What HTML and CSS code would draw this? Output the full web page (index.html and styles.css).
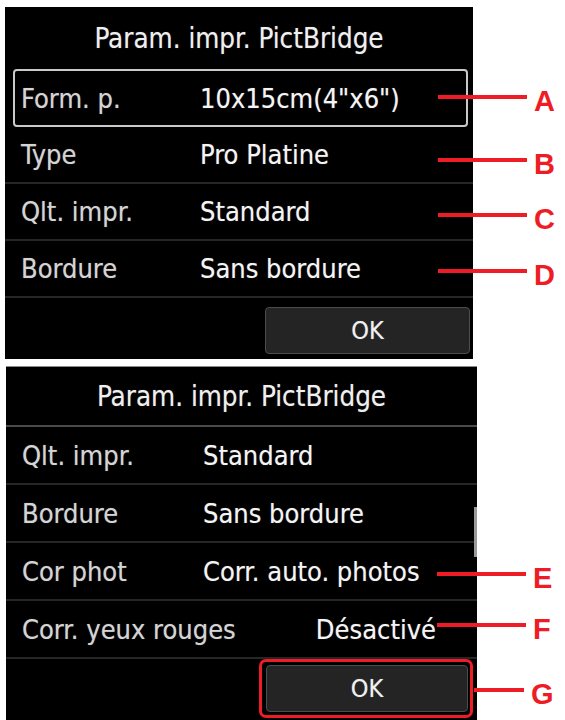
FILE: index.html
```html
<!DOCTYPE html>
<html lang="fr">
<head>
<meta charset="utf-8">
<title>Param. impr. PictBridge</title>
<link rel="stylesheet" href="styles.css">
</head>
<body>
<div class="page">
  <div class="screen screen-one">
    <div class="title">Param. impr. PictBridge</div>
    <div class="row selected"><span class="label">Form. p.</span><span class="value">10x15cm(4"x6")</span></div>
    <div class="row"><span class="label">Type</span><span class="value">Pro Platine</span></div>
    <div class="row"><span class="label">Qlt. impr.</span><span class="value">Standard</span></div>
    <div class="row"><span class="label">Bordure</span><span class="value">Sans bordure</span></div>
    <div class="footer"><div class="ok">OK</div></div>
  </div>

  <div class="screen screen-two">
    <div class="title">Param. impr. PictBridge</div>
    <div class="row"><span class="label">Qlt. impr.</span><span class="value">Standard</span></div>
    <div class="row"><span class="label">Bordure</span><span class="value">Sans bordure</span></div>
    <div class="row"><span class="label">Cor phot</span><span class="value">Corr. auto. photos</span></div>
    <div class="row"><span class="label">Corr. yeux rouges</span><span class="value value-right">Désactivé</span></div>
    <div class="footer"><div class="ok-wrap"><div class="ok">OK</div></div></div>
    <div class="scrollbar"></div>
  </div>

  <div class="callout c-a"><span class="line"></span><span class="letter">A</span></div>
  <div class="callout c-b"><span class="line"></span><span class="letter">B</span></div>
  <div class="callout c-c"><span class="line"></span><span class="letter">C</span></div>
  <div class="callout c-d"><span class="line"></span><span class="letter">D</span></div>
  <div class="callout c-e"><span class="line"></span><span class="letter">E</span></div>
  <div class="callout c-f"><span class="line"></span><span class="letter">F</span></div>
  <div class="callout c-g"><span class="line short"></span><span class="letter">G</span></div>
</div>
</body>
</html>
```
FILE: styles.css
```css
html, body {
  margin: 0;
  padding: 0;
  background: #ffffff;
}

.page {
  position: relative;
  width: 565px;
  height: 720px;
  overflow: hidden;
  padding-top: 7px;
  box-sizing: border-box;
}

.screen {
  background: #000000;
  color: #ececec;
  font-family: "DejaVu Sans Condensed", "DejaVu Sans", sans-serif;
  font-stretch: condensed;
  font-size: 27px;
  box-sizing: border-box;
  text-shadow: 0 0 1px rgba(255, 255, 255, 0.4);
}

.screen-one {
  margin-left: 5px;
  width: 468px;
  height: 352px;
}

.screen-two {
  position: relative;
  margin-left: 6px;
  margin-top: 7px;
  width: 471px;
  height: 360px;
  border-top: 1px solid #8a8a8a;
}

.title {
  height: 62px;
  display: flex;
  align-items: center;
  justify-content: center;
  box-sizing: border-box;
  color: #efefef;
  font-size: 27.5px;
}

.screen-two .title {
  height: 60px;
  border-bottom: 2px solid #4a4a4a;
}

.row {
  height: 57px;
  display: flex;
  align-items: center;
  box-sizing: border-box;
  padding-left: 16px;
  border-bottom: 2px solid #262626;
}

.screen-two .row {
  height: 58px;
  padding-left: 16px;
}

.row.selected {
  height: 58px;
  margin: 0 5px 0 8px;
  padding-left: 6px;
  border: 2px solid #c9c9c9;
  border-radius: 4px;
}

.label {
  width: 179px;
  flex: none;
  color: #d4d4d4;
  white-space: nowrap;
}

.row.selected .label {
  width: 179px;
}

.screen-two .label {
  width: 181px;
}

.value {
  color: #f4f4f4;
  white-space: nowrap;
}

.value-right {
  margin-left: auto;
  margin-right: 41px;
}

.footer {
  height: 61px;
  display: flex;
  justify-content: flex-end;
  align-items: flex-start;
  padding-top: 9px;
  padding-right: 3px;
  box-sizing: border-box;
}

.screen-two .footer {
  padding-top: 0;
  padding-right: 4px;
}

.ok {
  width: 205px;
  height: 47px;
  box-sizing: border-box;
  background: #242424;
  border: 1px solid #4c4c4c;
  border-radius: 4px;
  display: flex;
  align-items: center;
  justify-content: center;
  font-size: 25px;
  color: #f0f0f0;
}

.ok-wrap {
  border: 3px solid #ee1c25;
  border-radius: 7px;
  padding: 3px 2px 3px 4px;
}

.ok-wrap .ok {
  width: 202px;
}

.scrollbar {
  position: absolute;
  right: 0;
  top: 140px;
  width: 3px;
  height: 50px;
  background: #9a9a9a;
}

.callout {
  position: absolute;
  display: flex;
  align-items: center;
  height: 28px;
}

.line {
  display: block;
  width: 89px;
  height: 4px;
  background: #ee1c25;
}

.line.short {
  width: 50px;
}

.letter {
  margin-left: 7px;
  margin-top: 8px;
  font-family: "Liberation Sans", Arial, sans-serif;
  font-weight: bold;
  font-size: 29px;
  line-height: 28px;
  color: #ee1c25;
}

.c-a { left: 438px; top: 83px; }
.c-b { left: 438px; top: 146px; }
.c-c { left: 438px; top: 201px; }
.c-d { left: 438px; top: 257px; }
.c-e { left: 437px; top: 560px; }
.c-f { left: 437px; top: 611px; }
.c-g { left: 474px; top: 676px; }
```
